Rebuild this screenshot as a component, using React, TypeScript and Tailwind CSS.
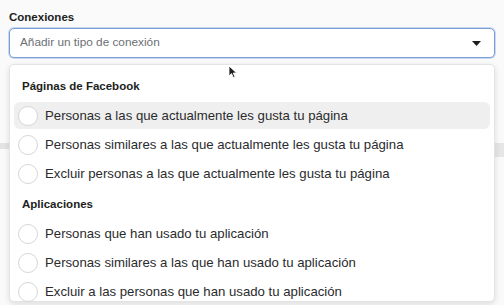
import type { FC } from 'react';

type Option = {
    label: string;
    active?: boolean;
};

const pageOptions: Option[] = [
    { label: 'Personas a las que actualmente les gusta tu página', active: true },
    { label: 'Personas similares a las que actualmente les gusta tu página' },
    { label: 'Excluir personas a las que actualmente les gusta tu página' },
];

const appOptions: Option[] = [
    { label: 'Personas que han usado tu aplicación' },
    { label: 'Personas similares a las que han usado tu aplicación' },
    { label: 'Excluir a las personas que han usado tu aplicación' },
];

const OptionRow: FC<Option> = ({ label, active }) => (
    <div
        className={`mx-[4px] mb-[2px] flex h-[27px] items-center gap-[7px] rounded-[6px] pl-[4px] ${
            active ? 'bg-[#efefef]' : ''
        }`}
    >
        <span className="h-[20px] w-[20px] shrink-0 rounded-full border border-[#d6d6d6] bg-white" />
        <span className="text-[13.2px] text-[#2a2b2d]">{label}</span>
    </div>
);

const SectionTitle: FC<{ title: string; first?: boolean }> = ({ title, first }) => (
    <div
        className={`flex items-center px-[12px] text-[11.5px] font-bold text-[#1c1e21] ${
            first ? 'h-[31px]' : 'h-[30px]'
        }`}
    >
        {title}
    </div>
);

const App: FC = () => {
    return (
        <div
            className="relative h-[305px] w-[504px] overflow-hidden bg-[#fafafa]"
            style={{ fontFamily: '"Liberation Sans", Arial, sans-serif' }}
        >
            <div className="px-[9px] pt-[8px]">
                <div className="h-[20px] text-[11.5px] font-bold leading-[18px] text-[#1c1e21]">Conexiones</div>
                <div className="flex h-[30px] items-center justify-between rounded-[5px] border border-[#7a9ed6] bg-white pl-[10px] pr-[10px] shadow-[0_0_0_1px_#c9d8f0]">
                    <span className="text-[11.8px] text-[#6b6f75]">Añadir un tipo de conexión</span>
                    <svg width="9" height="5" viewBox="0 0 9 5" className="mr-[3px]">
                        <path d="M0 0 L9 0 L4.5 5 Z" fill="#1c1e21" />
                    </svg>
                </div>
            </div>

            {/* content behind the dropdown */}
            <div className="mt-[85px] flex justify-between">
                <div className="h-[6px] w-[9px] bg-[#e3e3e3]" />
                <div className="h-[14px] w-[9px] bg-[#e6e6e6]" />
            </div>

            <div className="absolute left-[9px] top-[64px] h-[238px] w-[486px] rounded-[5px] border border-[#e4e4e4] bg-white pt-[6px] shadow-[0_2px_6px_rgba(0,0,0,0.12)]">
                <SectionTitle title="Páginas de Facebook" first />
                {pageOptions.map(o => (
                    <OptionRow key={o.label} {...o} />
                ))}
                <div className="h-[1px]" />
                <SectionTitle title="Aplicaciones" />
                {appOptions.map(o => (
                    <OptionRow key={o.label} {...o} />
                ))}
            </div>

            {/* mouse cursor */}
            <svg width="10" height="14" viewBox="0 0 10 14" className="absolute left-[228px] top-[65px]">
                <path d="M1 1 L1 11 L3.5 8.6 L5.4 12.6 L7 11.9 L5.2 8 L8.6 8 Z" fill="#1c1e21" stroke="#ffffff" strokeWidth="0.8" />
            </svg>
        </div>
    );
};

export default App;
